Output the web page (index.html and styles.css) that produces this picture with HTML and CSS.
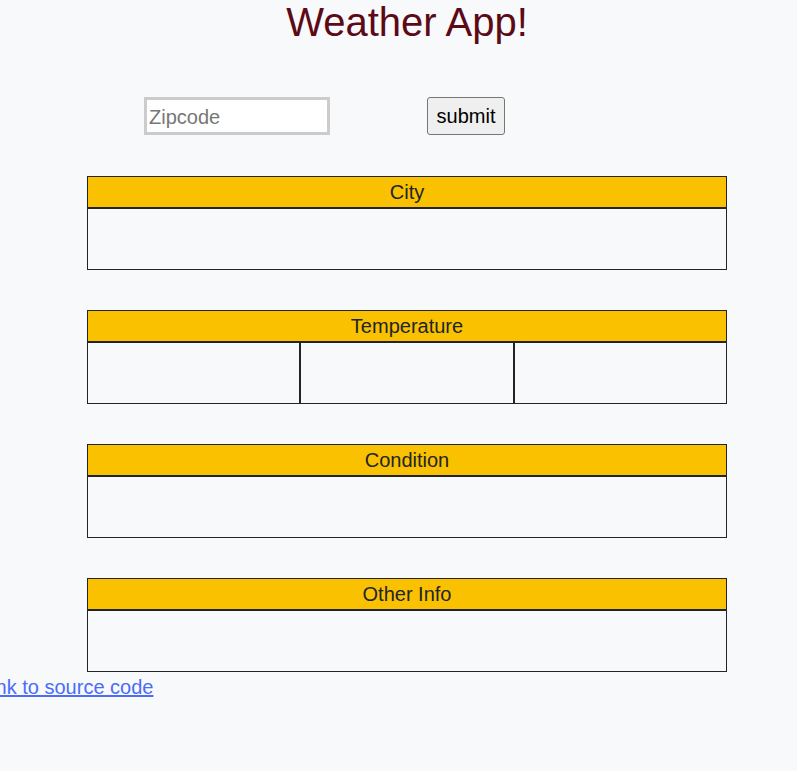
FILE: index.html
```html
<!DOCTYPE html>
<html>
<head>
<meta charset="utf-8">
<title>Weather App</title>
<link rel="stylesheet" href="styles.css">
</head>
<body>
<main class="container">
  <h1 class="title">Weather App!</h1>
  <form class="search">
    <input class="zip" type="text" placeholder="Zipcode">
    <button class="submit" type="button">submit</button>
  </form>
  <section class="card">
    <div class="card-head">City</div>
    <div class="card-body"><div class="cell"></div></div>
  </section>
  <section class="card">
    <div class="card-head">Temperature</div>
    <div class="card-body"><div class="cell"></div><div class="cell"></div><div class="cell"></div></div>
  </section>
  <section class="card">
    <div class="card-head">Condition</div>
    <div class="card-body"><div class="cell"></div></div>
  </section>
  <section class="card">
    <div class="card-head">Other Info</div>
    <div class="card-body"><div class="cell"></div></div>
  </section>
</main>
<a class="source" href="#">Link to source code</a>
</body>
</html>
```
FILE: styles.css
```css
html, body {
  margin: 0;
  padding: 0;
  background: #f8f9fa;
  font-family: "Liberation Sans", Arial, sans-serif;
  color: #212529;
}
.container {
  width: 640px;
  margin-left: 87px;
  display: flex;
  flex-direction: column;
}
.title {
  margin: 0;
  font-size: 40px;
  font-weight: normal;
  line-height: 44px;
  text-align: center;
  color: #5c0a16;
}
.search {
  display: flex;
  align-items: center;
  margin-top: 53px;
  padding-left: 57px;
  gap: 97px;
}
.zip {
  box-sizing: border-box;
  width: 186px;
  height: 38px;
  border: 3px solid #cccccc;
  padding: 2px 2px 0 2px;
  margin: 0;
  font-family: "Liberation Sans", Arial, sans-serif;
  font-size: 20px;
  background: #ffffff;
  outline: none;
}
.zip::placeholder { color: #777777; }
.submit {
  box-sizing: border-box;
  width: 78px;
  height: 38px;
  margin: 0;
  padding: 1px 0 0 0;
  border: 1px solid #767676;
  border-radius: 3px;
  background: #efefef;
  font-family: "Liberation Sans", Arial, sans-serif;
  font-size: 20px;
  color: #000;
}
.card {
  margin-top: 40px;
  display: flex;
  flex-direction: column;
}
.search + .card { margin-top: 41px; }
.card-head {
  box-sizing: border-box;
  height: 32px;
  border: 1px solid #212529;
  background: #f9c100;
  font-size: 20px;
  line-height: 30px;
  text-align: center;
}
.card-body {
  display: flex;
}
.cell {
  flex: 1 1 0;
  box-sizing: border-box;
  height: 62px;
  border: 1px solid #212529;
}
.source {
  display: inline-block;
  margin-left: -20px;
  margin-top: 4px;
  font-size: 20px;
  line-height: 23px;
  color: #4a6cf8;
  text-decoration: underline;
}
```
